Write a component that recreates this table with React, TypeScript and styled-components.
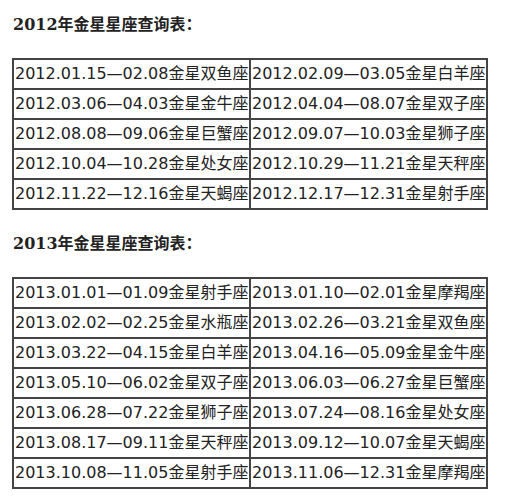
import styled, { createGlobalStyle } from "styled-components";

const GlobalStyle = createGlobalStyle`
  body {
    margin: 0;
    background: #fff;
  }
`;

const Page = styled.div`
  padding: 13px 0 0 12px;
  color: #222;
`;

const Heading = styled.h3`
  margin: 0 0 21px 1px;
  font-family: "DejaVu Serif", "Noto Sans CJK SC", serif;
  font-weight: bold;
  font-size: 16px;
  line-height: 24px;
  color: #222;
`;

const Table = styled.table`
  width: 476px;
  table-layout: fixed;
  border-collapse: collapse;
  border: 2px solid #444;
  margin-bottom: 22px;
  font-family: "DejaVu Sans", "Noto Sans CJK SC", sans-serif;
  font-size: 16px;
`;

const Cell = styled.td`
  border: 2px solid #444;
  padding: 4px 0 4px 1px;
  line-height: 20px;
  white-space: nowrap;
  overflow: hidden;
  color: #222;
`;

const table2012 = [
  ["2012.01.15—02.08金星双鱼座", "2012.02.09—03.05金星白羊座"],
  ["2012.03.06—04.03金星金牛座", "2012.04.04—08.07金星双子座"],
  ["2012.08.08—09.06金星巨蟹座", "2012.09.07—10.03金星狮子座"],
  ["2012.10.04—10.28金星处女座", "2012.10.29—11.21金星天秤座"],
  ["2012.11.22—12.16金星天蝎座", "2012.12.17—12.31金星射手座"],
];

const table2013 = [
  ["2013.01.01—01.09金星射手座", "2013.01.10—02.01金星摩羯座"],
  ["2013.02.02—02.25金星水瓶座", "2013.02.26—03.21金星双鱼座"],
  ["2013.03.22—04.15金星白羊座", "2013.04.16—05.09金星金牛座"],
  ["2013.05.10—06.02金星双子座", "2013.06.03—06.27金星巨蟹座"],
  ["2013.06.28—07.22金星狮子座", "2013.07.24—08.16金星处女座"],
  ["2013.08.17—09.11金星天秤座", "2013.09.12—10.07金星天蝎座"],
  ["2013.10.08—11.05金星射手座", "2013.11.06—12.31金星摩羯座"],
];

const VenusTable = ({ title, rows }: { title: string; rows: string[][] }) => (
  <>
    <Heading>{title}</Heading>
    <Table>
      <tbody>
        {rows.map((row, i) => (
          <tr key={i}>
            {row.map((c) => (
              <Cell key={c}>{c}</Cell>
            ))}
          </tr>
        ))}
      </tbody>
    </Table>
  </>
);

export default function App() {
  return (
    <Page>
      <GlobalStyle />
      <VenusTable title="2012年金星星座查询表：" rows={table2012} />
      <VenusTable title="2013年金星星座查询表：" rows={table2013} />
    </Page>
  );
}
